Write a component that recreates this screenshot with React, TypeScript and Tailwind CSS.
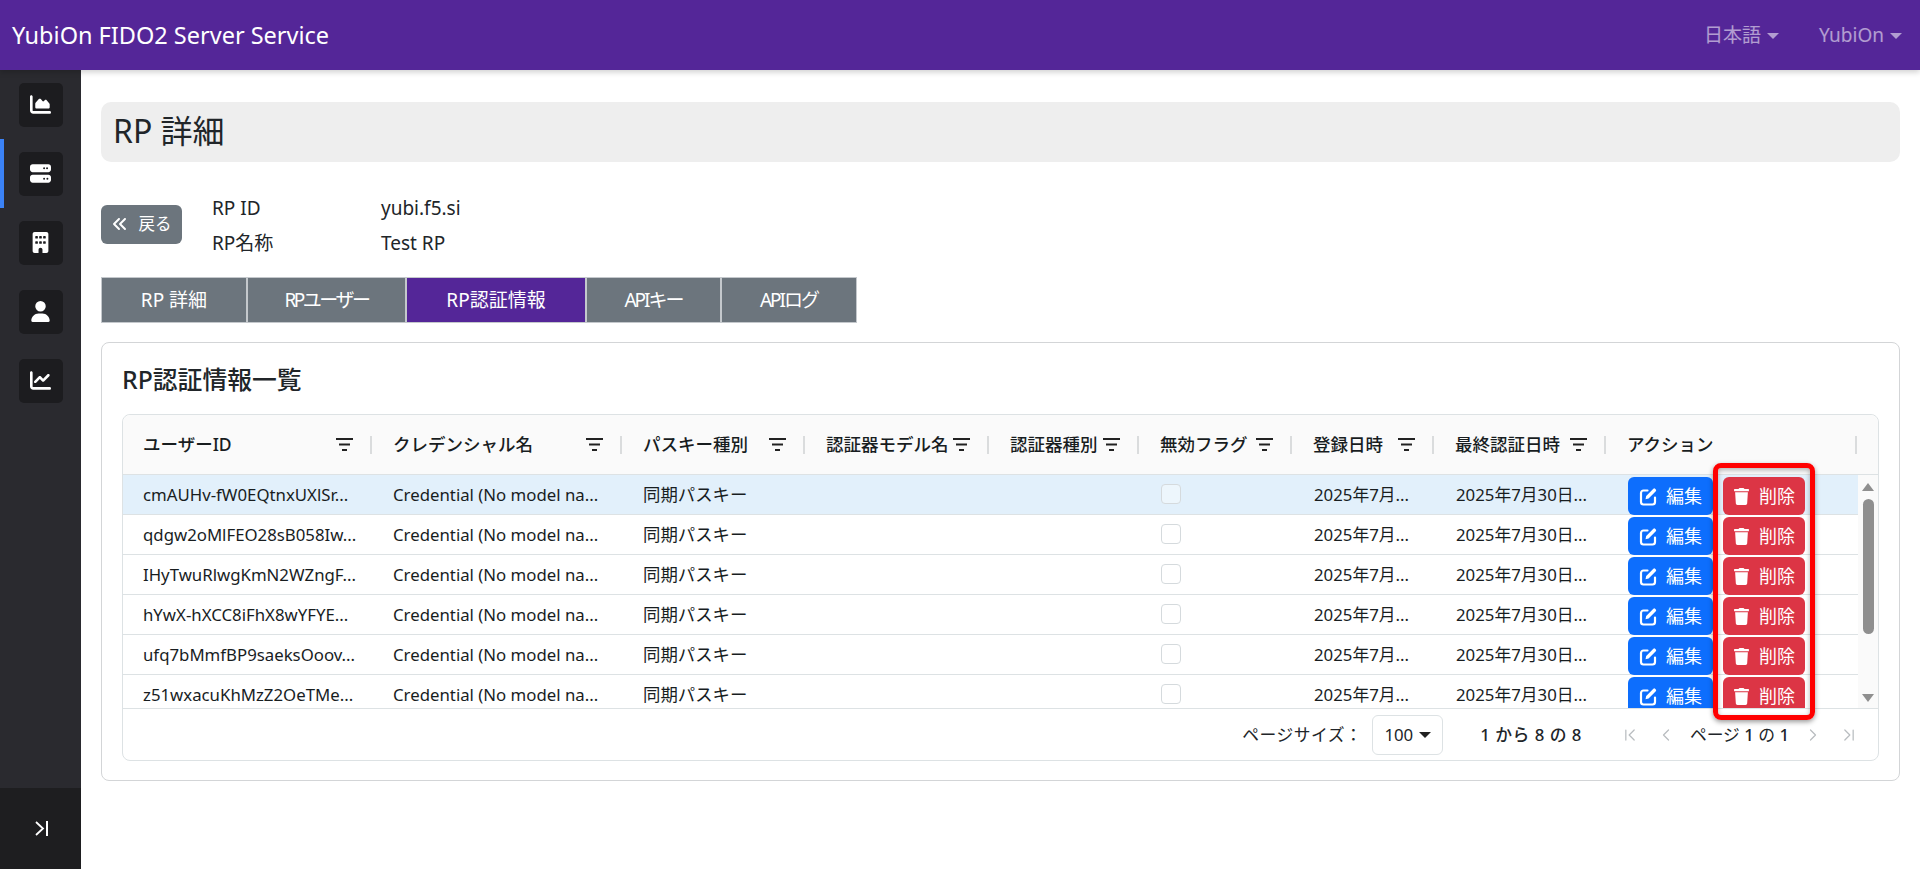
import { ChevronFirst, ChevronLast, ChevronLeft, ChevronRight } from "lucide-react";
import { FaTrash } from "react-icons/fa";
import { FaAnglesLeft, FaBuilding, FaChartArea, FaChartLine, FaServer, FaUser } from "react-icons/fa6";

const navIcons = [FaChartArea, FaServer, FaBuilding, FaUser, FaChartLine];
const tabs = [
  { label: "RP 詳細", w: "w-[144px]" },
  { label: "RPユーザー", w: "w-[159px] tracking-[-2.5px]" },
  { label: "RP認証情報", w: "w-[180px] text-[19.5px]", active: true },
  { label: "APIキー", w: "w-[135px] tracking-[-2px]" },
  { label: "APIログ", w: "w-[136px] tracking-[-2px]" },
];
const columns = [
  { label: "ユーザーID", w: "w-[250px]", filter: true },
  { label: "クレデンシャル名", w: "w-[250px]", filter: true },
  { label: "パスキー種別", w: "w-[183px]", filter: true },
  { label: "認証器モデル名", w: "w-[184px]", filter: true },
  { label: "認証器種別", w: "w-[150px]", filter: true },
  { label: "無効フラグ", w: "w-[153px]", filter: true },
  { label: "登録日時", w: "w-[142px]", filter: true },
  { label: "最終認証日時", w: "w-[172px]", filter: true },
  { label: "アクション", w: "w-[251px]", filter: false },
];
const userIds = [
  "cmAUHv-fW0EQtnxUXlSr...",
  "qdgw2oMlFEO28sB058Iw...",
  "IHyTwuRlwgKmN2WZngF...",
  "hYwX-hXCC8iFhX8wYFYE...",
  "ufq7bMmfBP9saeksOoov...",
  "z51wxacuKhMzZ2OeTMe...",
];

function FilterIcon() {
  return (
    <svg width="17" height="13" viewBox="0 0 17 13" className="shrink-0 text-[#222]">
      <path d="M0 1h17M3 6.5h11M6 12h5" stroke="currentColor" strokeWidth="2" />
    </svg>
  );
}

function EditIcon() {
  return (
    <svg width="18" height="19" viewBox="0 0 18 19" className="shrink-0">
      <path d="M8.5 3.5H4.5A2.5 2.5 0 0 0 2 6v9a2.5 2.5 0 0 0 2.5 2.5h9A2.5 2.5 0 0 0 16 15v-4.5" fill="none" stroke="currentColor" strokeWidth="2.2" strokeLinecap="round" />
      <path d="M6.5 12.2l.7-3.2L14.4 1.8a1.2 1.2 0 0 1 1.7 0l.7.7a1.2 1.2 0 0 1 0 1.7L9.6 11.5z" fill="currentColor" />
    </svg>
  );
}

function Caret({ className }: { className: string }) {
  return <span className={"ml-[6px] inline-block h-0 w-0 border-x-[6px] border-t-[6px] border-x-transparent " + className} />;
}

function HeaderCell({ label, w, filter }: { label: string; w: string; filter: boolean }) {
  return (
    <div className={"relative flex h-full shrink-0 items-center pl-[20px] pr-[20px] " + w}>
      <span className="grow whitespace-nowrap text-[17.5px] font-medium text-[#181d1f]">{label}</span>
      {filter && <FilterIcon />}
      <span className="absolute right-[1px] top-[21px] h-[18px] w-[2px] bg-[#dadcdd]" />
    </div>
  );
}

function Row({ id, selected }: { id: string; selected: boolean }) {
  return (
    <div className={"flex h-[40px] items-center border-b border-[#dde2e4] text-[16.8px] text-[#181d1f] " + (selected ? "bg-[#e2f0fb]" : "bg-white")}>
      <div className="w-[250px] shrink-0 whitespace-nowrap pl-[20px]">{id}</div>
      <div className="w-[250px] shrink-0 whitespace-nowrap pl-[20px]">Credential (No model na...</div>
      <div className="w-[183px] shrink-0 whitespace-nowrap pl-[20px] text-[17.4px]">同期パスキー</div>
      <div className="w-[184px] shrink-0" />
      <div className="w-[150px] shrink-0" />
      <div className="w-[153px] shrink-0 pl-[21px]">
        <div className="-mt-[2px] h-[20px] w-[20px] rounded-[4px] border border-[#d5dadd] bg-white/40" />
      </div>
      <div className="w-[142px] shrink-0 whitespace-nowrap pl-[21px]">2025年7月...</div>
      <div className="w-[172px] shrink-0 whitespace-nowrap pl-[21px]">2025年7月30日...</div>
      <div className="mt-[2px] flex w-[251px] shrink-0 items-center gap-[10px] pl-[21px]">
        <button className="flex h-[38px] w-[85px] items-center justify-center gap-[9px] rounded-[6px] bg-[#0d6efd] pt-[1px] text-[18px] text-white">
          <EditIcon />
          編集
        </button>
        <button className="flex h-[38px] w-[82px] items-center justify-center gap-[9px] rounded-[6px] bg-[#dc3545] pt-[1px] text-[18px] text-white">
          <FaTrash className="text-[17px]" />
          削除
        </button>
      </div>
    </div>
  );
}

export default function App() {
  return (
    <div className="flex h-[869px] flex-col overflow-hidden bg-white font-['Noto_Sans','Noto_Sans_CJK_JP',sans-serif] text-[#212529]">
      <header className="relative z-10 flex h-[70px] shrink-0 items-center justify-between bg-[#542698] pl-[12px] pr-[18px] pt-[1px] shadow-[0_2px_6px_rgba(0,0,0,0.2)]">
        <div className="text-[23.5px] text-white">YubiOn FIDO2 Server Service</div>
        <div className="flex items-center gap-[40px] text-[19px] text-white/55">
          <div className="flex items-center">日本語<Caret className="border-t-white/55" /></div>
          <div className="flex items-center">YubiOn<Caret className="border-t-white/55" /></div>
        </div>
      </header>

      <div className="flex grow">
        <aside className="flex w-[81px] shrink-0 flex-col justify-between bg-[#2a2a2f]">
          <nav>
            {navIcons.map((Icon, i) => (
              <div key={i} className={"flex h-[69px] items-center justify-center " + (i === 1 ? "border-l-4 border-[#3b82f6] pr-[4px]" : "")}>
                <div className="flex h-[44px] w-[44px] items-center justify-center rounded-[5px] bg-[#1c1c1f] text-[21px] text-white">
                  <Icon />
                </div>
              </div>
            ))}
          </nav>
          <div className="flex h-[81px] items-center justify-center bg-[#1e1e20] pl-[2px] text-white">
            <svg width="13" height="15" viewBox="0 0 13 15" fill="none" stroke="currentColor">
              <path d="M1 1l7 6.5-7 6.5" strokeWidth="1.8" />
              <path d="M12 0v15" strokeWidth="2" />
            </svg>
          </div>
        </aside>

        <main className="grow pl-[20px] pr-[20px] pt-[32px]">
          <div className="flex h-[60px] items-center rounded-[10px] bg-[#eeeeee] pb-[2px] pl-[12px] text-[32px]">RP 詳細</div>

          <div className="mt-[29px] flex items-center">
            <button className="mb-[4px] flex h-[39px] w-[81px] items-center justify-center gap-[11px] rounded-[6px] bg-[#6c757d] text-[16.5px] text-white">
              <FaAnglesLeft className="text-[16px]" />
              戻る
            </button>
            <div className="ml-[30px] grid grid-cols-[169px_auto] text-[19px] leading-[35px]">
              <div>RP ID</div>
              <div>yubi.f5.si</div>
              <div>RP名称</div>
              <div>Test RP</div>
            </div>
          </div>

          <div className="mt-[16px] flex w-fit border border-[#c4c8cc]">
            {tabs.map((t, i) => (
              <div key={t.label} className={"flex h-[44px] items-center justify-center text-[19px] text-white " + t.w + " " + (i > 0 ? "border-l-2 border-[#c4c8cc] " : "") + (t.active ? "bg-[#542698]" : "bg-[#6c757d]")}>
                {t.label}
              </div>
            ))}
          </div>

          <section className="mt-[19px] h-[439px] rounded-[8px] border border-[#d3d5d7] px-[20px] pt-[18px]">
            <h2 className="text-[24.8px] font-medium leading-[36px] text-[#212529]">RP認証情報一覧</h2>
            <div className="relative mt-[17px] flex h-[347px] flex-col rounded-[8px] border border-[#dde2e4]">
              <div className="flex h-[60px] shrink-0 items-center rounded-t-[8px] border-b border-[#dde2e4] bg-[#fafafa]">
                {columns.map((c) => (
                  <HeaderCell key={c.label} {...c} />
                ))}
              </div>
              <div className="flex min-h-0 grow">
                <div className="w-[1735px] shrink-0 overflow-hidden">
                  {userIds.map((id, i) => (
                    <Row key={id} id={id} selected={i === 0} />
                  ))}
                </div>
                <div className="relative flex w-[20px] shrink-0 flex-col items-center bg-[#fafafa] pt-[8px]">
                  <span className="h-0 w-0 border-x-[6px] border-b-[8px] border-x-transparent border-b-[#8f8f8f]" />
                  <span className="mt-[8px] h-[135px] w-[11px] rounded-full bg-[#8f8f8f]" />
                  <span className="absolute bottom-[6px] h-0 w-0 border-x-[6px] border-t-[8px] border-x-transparent border-t-[#8f8f8f]" />
                </div>
              </div>
              <div className="flex h-[52px] shrink-0 items-center justify-end border-t border-[#dde2e4] pr-[19px] text-[16.8px]">
                <span className="whitespace-nowrap tracking-[0.5px]">ページサイズ：</span>
                <div className="ml-[10px] flex h-[40px] w-[71px] items-center justify-center rounded-[6px] border border-[#dde2e4]">
                  100<Caret className="border-t-[#222]" />
                </div>
                <span className="ml-[37px] whitespace-nowrap font-medium tracking-[0.5px]">1 から 8 の 8</span>
                <div className="ml-[38px] flex items-center text-[#b9bdc0]">
                  <ChevronFirst size={20} strokeWidth={1.5} />
                  <ChevronLeft size={20} strokeWidth={1.5} className="ml-[16px]" />
                </div>
                <span className="mx-[14px] whitespace-nowrap">ページ <b className="font-medium">1</b> の <b className="font-medium">1</b></span>
                <div className="flex items-center text-[#b9bdc0]">
                  <ChevronRight size={20} strokeWidth={1.5} />
                  <ChevronLast size={20} strokeWidth={1.5} className="ml-[16px]" />
                </div>
              </div>
              {/* annotation box around the delete buttons */}
              <div className="pointer-events-none absolute left-[1590px] top-[48px] h-[257px] w-[102px] rounded-[8px] border-[5px] border-[#ff0000] shadow-[0_2px_5px_rgba(0,0,0,0.4),inset_0_2px_5px_rgba(0,0,0,0.3)]" />
            </div>
          </section>
        </main>
      </div>
    </div>
  );
}
